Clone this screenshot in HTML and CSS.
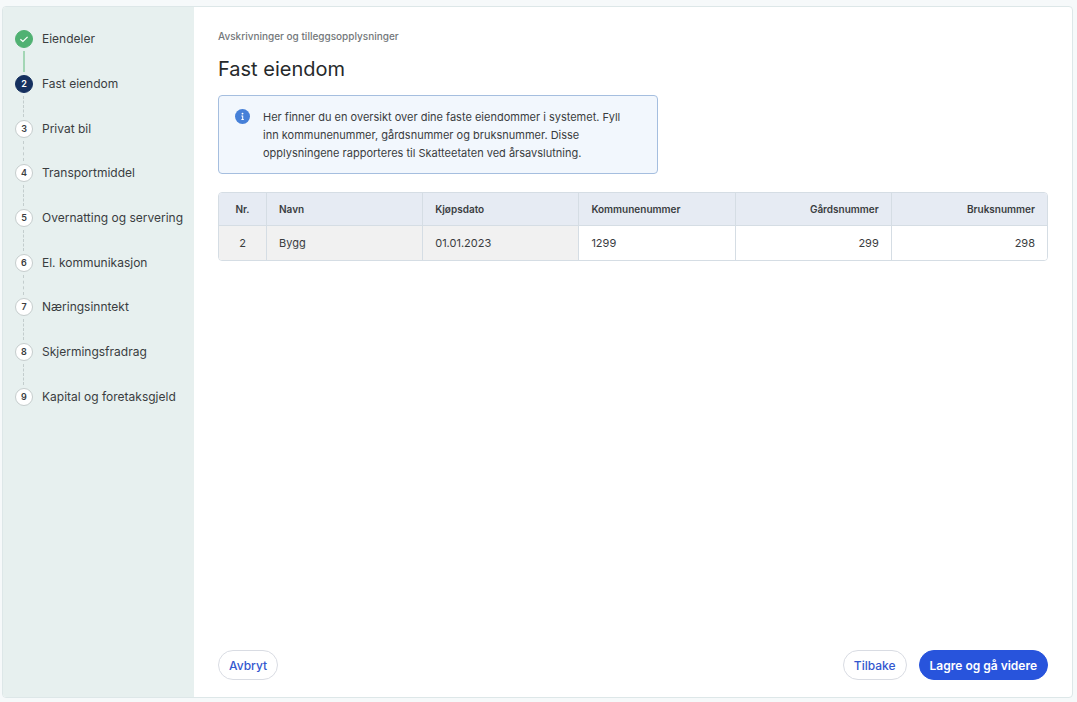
FILE: index.html
```html
<!DOCTYPE html>
<html lang="nb">
<head>
  <meta charset="utf-8">
  <meta name="viewport" content="width=device-width, initial-scale=1">
  <title>Fast eiendom</title>
  <link rel="stylesheet" href="styles.css">
</head>
<body>
  <div class="wizard">
    <nav class="sidebar" aria-label="Steg">
      <ol class="steps">
        <li class="step step--done">
          <a class="step__link" href="#eiendeler">
            <span class="step__marker">
              <svg class="step__check" viewBox="0 0 10 10" aria-hidden="true"><path d="M1.4 5.2 3.9 7.5 8.6 2.8"/></svg>
            </span>
            <span>Eiendeler</span>
          </a>
        </li>
        <li class="step step--current">
          <a class="step__link" href="#fast-eiendom" aria-current="step"><span class="step__marker">2</span><span>Fast eiendom</span></a>
        </li>
        <li class="step"><a class="step__link" href="#privat-bil"><span class="step__marker">3</span><span>Privat bil</span></a></li>
        <li class="step"><a class="step__link" href="#transportmiddel"><span class="step__marker">4</span><span>Transportmiddel</span></a></li>
        <li class="step"><a class="step__link" href="#overnatting"><span class="step__marker">5</span><span>Overnatting og servering</span></a></li>
        <li class="step"><a class="step__link" href="#kommunikasjon"><span class="step__marker">6</span><span>El. kommunikasjon</span></a></li>
        <li class="step"><a class="step__link" href="#naeringsinntekt"><span class="step__marker">7</span><span>Næringsinntekt</span></a></li>
        <li class="step"><a class="step__link" href="#skjermingsfradrag"><span class="step__marker">8</span><span>Skjermingsfradrag</span></a></li>
        <li class="step"><a class="step__link" href="#kapital"><span class="step__marker">9</span><span>Kapital og foretaksgjeld</span></a></li>
      </ol>
    </nav>

    <main class="content">
      <p class="eyebrow">Avskrivninger og tilleggsopplysninger</p>
      <h1 class="title">Fast eiendom</h1>

      <div class="notice">
        <svg class="notice__icon" viewBox="0 0 16 16" aria-hidden="true">
          <circle cx="8" cy="8" r="8" fill="#4680d8"/>
          <circle cx="8" cy="4.9" r="1" fill="#fff"/>
          <path d="M6.8 7.4H8.2V11.1M6.8 11.1H9.4" fill="none" stroke="#fff" stroke-width="1.1"/>
        </svg>
        <p class="notice__text">Her finner du en oversikt over dine faste eiendommer i systemet. Fyll inn kommunenummer, gårdsnummer og bruksnummer. Disse opplysningene rapporteres til Skatteetaten ved årsavslutning.</p>
      </div>

      <div class="table-frame">
        <table class="table">
          <thead>
            <tr>
              <th class="table__number" scope="col">Nr.</th>
              <th scope="col">Navn</th>
              <th scope="col">Kjøpsdato</th>
              <th scope="col" id="kommune">Kommunenummer</th>
              <th class="table__end" scope="col" id="gard">Gårdsnummer</th>
              <th class="table__end" scope="col" id="bruk">Bruksnummer</th>
            </tr>
          </thead>
          <tbody>
            <tr>
              <td class="table__number">2</td>
              <td>Bygg</td>
              <td>01.01.2023</td>
              <td class="table__edit"><input class="cell-input" type="text" value="1299" aria-labelledby="kommune"></td>
              <td class="table__edit"><input class="cell-input cell-input--end" type="text" value="299" aria-labelledby="gard"></td>
              <td class="table__edit"><input class="cell-input cell-input--end" type="text" value="298" aria-labelledby="bruk"></td>
            </tr>
          </tbody>
        </table>
      </div>

      <footer class="actions">
        <button class="button" type="button">Avbryt</button>
        <div class="actions__group">
          <button class="button" type="button">Tilbake</button>
          <button class="button button--primary" type="button">Lagre og gå videre</button>
        </div>
      </footer>
    </main>
  </div>
</body>
</html>
```
FILE: styles.css
```css
* {
  box-sizing: border-box;
}

body {
  margin: 0;
  min-height: 100vh;
  display: flex;
  padding: 6px 4px 4px 2px;
  background: #f6f9fa;
  color: #3a3d3f;
  font-family: Inter, "Liberation Sans", sans-serif;
  font-size: 12px;
}

.wizard {
  flex: 1;
  display: flex;
  border: 1px solid #dde7e8;
  border-radius: 4px;
  background: #fff;
  overflow: hidden;
}

.sidebar {
  flex: none;
  width: 191px;
  padding: 10px 12px;
  background: #e7f0ef;
}

.steps {
  display: grid;
  grid-auto-rows: 1fr;
  min-height: 402px;
  margin: 0;
  padding: 0;
  list-style: none;
}

.step {
  display: flex;
  align-items: center;
  position: relative;
}

.step:not(:last-child)::after {
  content: "";
  position: absolute;
  top: calc(50% + 12px);
  bottom: calc(12px - 50%);
  left: 8px;
  border-left: 1px dashed #c3cdcd;
}

.step--done:not(:last-child)::after {
  border-left: 2px solid #a3d6b5;
}

.step__link {
  display: flex;
  align-items: center;
  gap: 9px;
  color: inherit;
  font-size: 12px;
  line-height: 18px;
  text-decoration: none;
  white-space: nowrap;
}

.step__marker {
  display: grid;
  place-items: center;
  width: 18px;
  height: 18px;
  border: 1px solid #c6cdcd;
  border-radius: 50%;
  background: #fff;
  font-size: 9px;
  font-weight: 600;
  line-height: 16px;
}

.step--done .step__marker {
  border-color: #50b172;
  background: #50b172;
}

.step--current .step__marker {
  border-color: #15305f;
  background: #15305f;
  color: #fff;
}

.step__check {
  width: 10px;
  height: 10px;
  fill: none;
  stroke: #fff;
  stroke-width: 1.2;
}

.content {
  flex: 1;
  min-width: 0;
  display: flex;
  flex-direction: column;
  padding: 21px 24px 17px;
}

.eyebrow {
  margin: 0;
  color: #73777a;
  font-size: 10px;
  font-weight: 500;
  line-height: 16px;
}

.title {
  margin: 12px 0 13px;
  color: #26292b;
  font-size: 20px;
  font-weight: 400;
  line-height: 26px;
}

.notice {
  display: flex;
  gap: 13px;
  max-width: 440px;
  padding: 12px 24px 11px 16px;
  border: 1px solid #a5bedf;
  border-radius: 4px;
  background: #f2f7fd;
}

.notice__icon {
  flex: none;
  width: 15px;
  height: 15px;
  margin-top: 1px;
}

.notice__text {
  margin: 0;
  font-size: 11px;
  line-height: 18px;
}

.table-frame {
  margin-top: 18px;
  border: 1px solid #d5dde4;
  border-radius: 4px;
  overflow: hidden;
}

.table {
  width: 100%;
  border-collapse: separate;
  border-spacing: 0;
  table-layout: fixed;
}

.table th,
.table td {
  padding: 0 12px;
  border-left: 1px solid #d5dde4;
  text-align: left;
}

.table th {
  height: 32px;
  background: #e6ebf3;
  font-size: 10px;
  font-weight: 600;
}

.table td {
  height: 35px;
  border-top: 1px solid #d5dde4;
  background: #f1f1f1;
  font-size: 11px;
}

.table th:first-child,
.table td:first-child {
  border-left: 0;
}

.table .table__number {
  width: 47px;
  text-align: center;
}

.table .table__end {
  text-align: right;
}

.table .table__edit {
  padding: 0;
  background: #fff;
}

.cell-input {
  display: block;
  width: 100%;
  height: 34px;
  padding: 0 12px;
  border: 0;
  background: transparent;
  color: inherit;
  font: inherit;
}

.cell-input--end {
  text-align: right;
}

.actions {
  display: flex;
  justify-content: space-between;
  margin-top: auto;
}

.actions__group {
  display: flex;
  gap: 12px;
}

.button {
  height: 30px;
  padding: 0 10px;
  border: 1px solid #d9dce3;
  border-radius: 15px;
  background: #fff;
  color: #3358cf;
  font-family: inherit;
  font-size: 12px;
  font-weight: 500;
}

.button--primary {
  border-color: #2854dc;
  background: #2854dc;
  color: #fff;
  font-weight: 600;
}
```
